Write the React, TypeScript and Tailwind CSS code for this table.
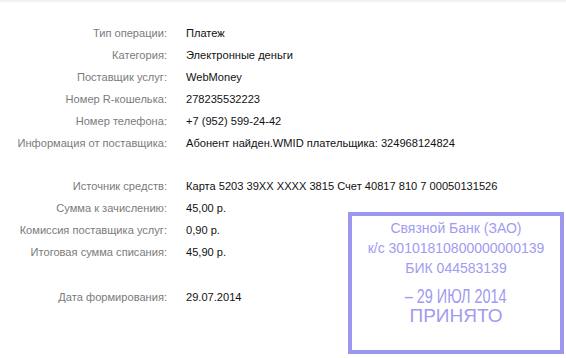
import React from "react";

interface Row {
    label: string;
    value: string;
}

const operation: Row[] = [
    { label: "Тип операции:", value: "Платеж" },
    { label: "Категория:", value: "Электронные деньги" },
    { label: "Поставщик услуг:", value: "WebMoney" },
    { label: "Номер R-кошелька:", value: "278235532223" },
    { label: "Номер телефона:", value: "+7 (952) 599-24-42" },
    { label: "Информация от поставщика:", value: "Абонент найден.WMID плательщика: 324968124824" },
];

const payment: Row[] = [
    { label: "Источник средств:", value: "Карта 5203 39XX XXXX 3815 Счет 40817 810 7 00050131526" },
    { label: "Сумма к зачислению:", value: "45,00 р." },
    { label: "Комиссия поставщика услуг:", value: "0,90 р." },
    { label: "Итоговая сумма списания:", value: "45,90 р." },
];

const InfoRow: React.FC<{ row: Row }> = ({ row }) => (
    <div className="flex items-center h-[22px] gap-[19px]">
        <span className="w-[167px] shrink-0 text-right text-[#7b7b7b]">{row.label}</span>
        <span className="text-[#111] whitespace-nowrap">{row.value}</span>
    </div>
);

// печать банка поверх квитанции
const BankStamp: React.FC = () => (
    <div className="absolute left-[348px] top-[212px] w-[216px] h-[142px] border-4 border-[#9b97ef] flex flex-col items-center pt-[2px] text-[#9f9bf0]">
        <div className="text-[14px] leading-[20px]">Связной Банк (ЗАО)</div>
        <div className="text-[14px] leading-[20px]">к/с 30101810800000000139</div>
        <div className="text-[14px] leading-[20px]">БИК 044583139</div>
        <div className="text-[20px] leading-[20px] mt-[8px] scale-x-[0.72]">– 29 ИЮЛ 2014</div>
        <div className="text-[19px] leading-[20px] font-medium">ПРИНЯТО</div>
    </div>
);

export default function App() {
    return (
        <div
            className="relative w-[566px] h-[358px] bg-white overflow-hidden text-[11.1px]"
            style={{ fontFamily: '"Liberation Sans", Arial, sans-serif' }}
        >
            <div className="h-[3px] bg-gradient-to-b from-[#ececec] to-white" />
            <div className="flex flex-col pt-[19px]">
                {operation.map((r) => (
                    <InfoRow key={r.label} row={r} />
                ))}
                <div className="h-[21px]" />
                {payment.map((r) => (
                    <InfoRow key={r.label} row={r} />
                ))}
                <div className="h-[23px]" />
                <InfoRow row={{ label: "Дата формирования:", value: "29.07.2014" }} />
            </div>
            <BankStamp />
        </div>
    );
}
